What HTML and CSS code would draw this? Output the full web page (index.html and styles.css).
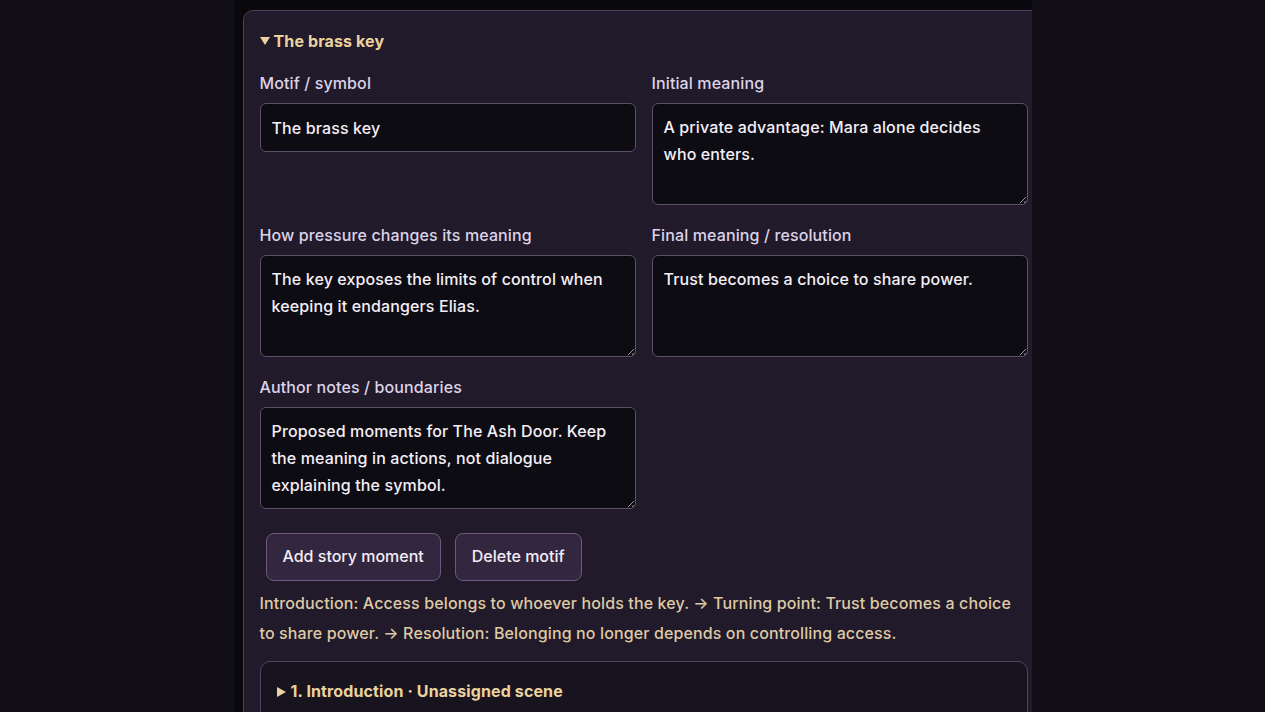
FILE: index.html
```html
<!DOCTYPE html>
<html lang="en">
<head>
  <meta charset="UTF-8">
  <meta name="viewport" content="width=device-width, initial-scale=1.0">
  <title>Motif Tracker</title>
  <link rel="stylesheet" href="styles.css">
</head>
<body>
  <main class="column">
    <details class="motif" open>
      <summary>The brass key</summary>
      <div class="fields">
        <label class="field">
          <span>Motif / symbol</span>
          <input type="text" value="The brass key">
        </label>
        <label class="field">
          <span>Initial meaning</span>
          <textarea>A private advantage: Mara alone decides who enters.</textarea>
        </label>
        <label class="field">
          <span>How pressure changes its meaning</span>
          <textarea>The key exposes the limits of control when keeping it endangers Elias.</textarea>
        </label>
        <label class="field">
          <span>Final meaning / resolution</span>
          <textarea>Trust becomes a choice to share power.</textarea>
        </label>
        <label class="field">
          <span>Author notes / boundaries</span>
          <textarea>Proposed moments for The Ash Door. Keep the meaning in actions, not dialogue explaining the symbol.</textarea>
        </label>
      </div>
      <div class="actions">
        <button>Add story moment</button>
        <button>Delete motif</button>
      </div>
      <p class="arc">Introduction: Access belongs to whoever holds the key. → Turning point: Trust becomes a choice to share power. → Resolution: Belonging no longer depends on controlling access.</p>
      <details class="moment">
        <summary>1. Introduction · Unassigned scene</summary>
      </details>
    </details>
  </main>
</body>
</html>
```

FILE: styles.css
```css
body { margin: 0; background: #110e18; font-family: Inter, "Noto Sans", sans-serif; font-size: 16px; font-weight: 500; letter-spacing: 0.12px; color: #ddd3e8; overflow: hidden; }
.column { width: 798px; min-height: 100vh; margin: 0 auto; background: #09080c; padding: 10px 0 0 9px; box-sizing: border-box; overflow: hidden; }
.motif { width: 802px; box-sizing: border-box; background: #201a2a; border: 1px solid #4a4058; border-radius: 10px; padding: 18px 16px 16px 16px; }
summary { list-style: none; color: #ecd29e; font-weight: 700; line-height: 24px; cursor: pointer; }
summary::-webkit-details-marker { display: none; }
summary::before { content: ""; display: inline-block; vertical-align: 2px; margin-right: 4px; border-left: 5px solid transparent; border-right: 5px solid transparent; border-top: 8px solid currentColor; }
.moment:not([open]) summary::before { vertical-align: 0; border-top: 5px solid transparent; border-bottom: 5px solid transparent; border-left: 9px solid currentColor; border-right: 0; margin-right: 5px; }
.fields { width: 768px; display: grid; grid-template-columns: 1fr 1fr; column-gap: 16px; row-gap: 18px; margin-top: 18px; align-items: start; }
.field { display: flex; flex-direction: column; gap: 8px; }
.field span { line-height: 24px; color: #ddd3e8; }
input, textarea { font: inherit; font-size: 16px; line-height: 27px; letter-spacing: 0.12px; color: #f4eff7; background: #0e0c13; border: 1px solid #5b5068; border-radius: 6px; padding: 10px 11px; box-sizing: border-box; width: 100%; }
input { height: 49px; }
textarea { height: 102px; resize: vertical; }
.actions { display: flex; gap: 14px; margin: 24px 0 0 6px; }
button { font: inherit; font-size: 16px; line-height: 24px; color: #f3edf7; background: #33273f; border: 1px solid #6b5a80; border-radius: 8px; padding: 10px 16px 12px; }
.arc { width: 768px; margin: 7px 0 13px; color: #dfc9a5; line-height: 30px; }
.moment { width: 768px; box-sizing: border-box; background: #18141f; border: 1px solid #4f4360; border-radius: 10px; padding: 17px 16px; }
```
